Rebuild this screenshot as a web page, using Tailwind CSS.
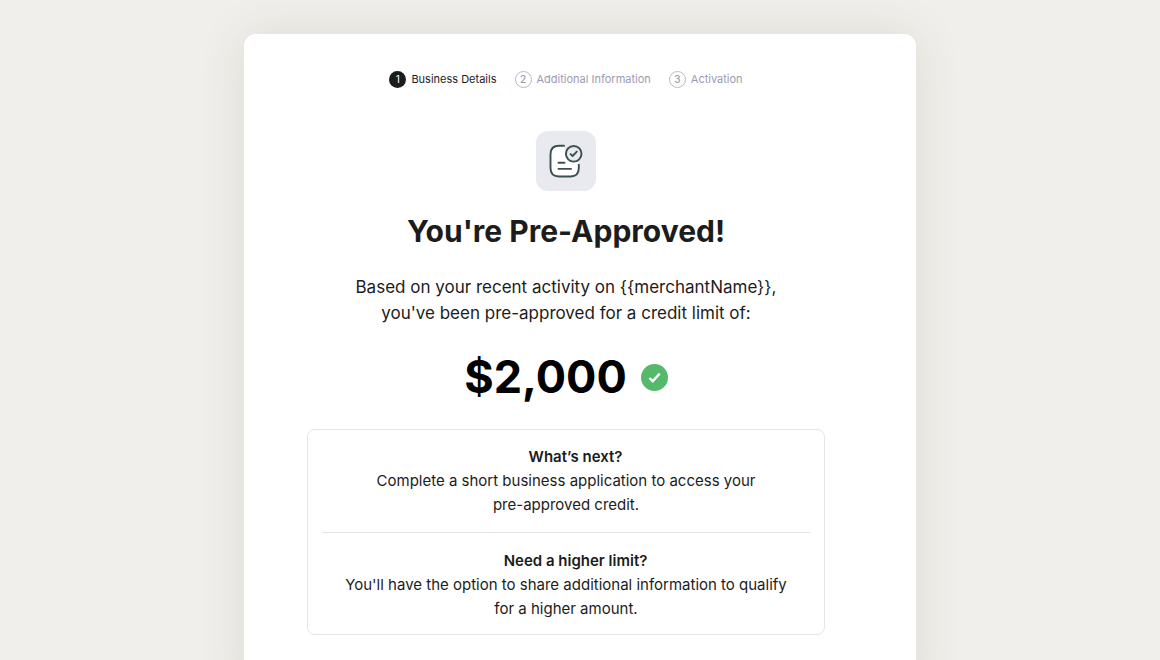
<!DOCTYPE html>
<html lang="en">
<head>
  <meta charset="UTF-8" />
  <meta name="viewport" content="width=device-width, initial-scale=1.0" />
  <title>You're Pre-Approved!</title>
  <script src="https://cdn.jsdelivr.net/npm/@tailwindcss/browser@4"></script>
</head>
<body class="flex min-h-screen bg-[#f0efeb] px-4 pt-[34px] font-['Inter',sans-serif] text-[#1c1c1c]">
  <main class="mx-auto flex w-full max-w-[672px] flex-col items-center rounded-t-xl bg-white pt-9 pr-[91px] pb-16 pl-[63px] text-center shadow-[0_0_48px_rgba(60,60,50,0.11)]">
    <!-- Steps -->
    <ol class="flex items-center gap-[18px] text-[11px] leading-[18px] whitespace-nowrap">
      <li class="flex items-center gap-[5px]" aria-current="step">
        <span class="flex size-[17px] items-center justify-center rounded-full bg-[#1c1c1c] text-[10px] text-white">1</span>
        Business Details
      </li>
      <li class="flex items-center gap-[5px] text-[#9b9bb0]">
        <span class="flex size-[17px] items-center justify-center rounded-full border border-[#b9b9cc] text-[10px] font-medium">2</span>
        Additional Information
      </li>
      <li class="flex items-center gap-[5px] text-[#9b9bb0]">
        <span class="flex size-[17px] items-center justify-center rounded-full border border-[#b9b9cc] text-[10px] font-medium">3</span>
        Activation
      </li>
    </ol>

    <div class="mt-[43px] flex size-[60px] items-center justify-center rounded-xl bg-[#e9eaf0]">
      <svg class="size-10" viewBox="0 0 40 40" fill="none" stroke="#3a5150" stroke-width="1.9" stroke-linecap="round" stroke-linejoin="round" aria-hidden="true">
        <path fill="#fff" stroke="none" d="M18 4.800h-5Q4.500 4.800 4.500 13v14.500q0 8 8 8h12.500q8 0 8-8V21l-8-1-6-6z" />
        <path d="M18 4.800h-5Q4.500 4.800 4.500 13.300v13.700q0 8.500 8.500 8.500h11.500q8.300 0 8.300-8.500v-3.300" />
        <path d="M12.500 21.800h6M12.500 27.900h12.500" />
        <circle cx="27.700" cy="12.800" r="7.800" fill="#e9eaf0" />
        <path d="m24.600 13.100 2 1.900 4.200-4.400" />
      </svg>
    </div>

    <h1 class="mt-5 text-[30px] leading-10 font-bold">You're Pre-Approved!</h1>
    <p class="mt-[23px] text-[17px] leading-[26px]">
      Based on your recent activity on {{merchantName}},<br />
      you've been pre-approved for a credit limit of:
    </p>

    <div class="mt-[23px] flex items-center gap-[14px]">
      <strong class="text-[45px] leading-14 font-bold text-black">$2,000</strong>
      <svg class="size-[27px]" viewBox="0 0 27 27" fill="none" aria-hidden="true">
        <circle cx="13.500" cy="13.500" r="13.500" fill="#54b96a" />
        <path d="m8.500 14 3.200 3.200 7-7.600" stroke="#fff" stroke-width="2.400" />
      </svg>
    </div>

    <!-- Info box -->
    <div class="mt-6 w-full rounded-lg border border-[#e6e6ea] px-[14px] text-[15px] leading-6">
      <section class="border-b border-[#e3e3ea] py-[15px]">
        <h2 class="pl-[19px] font-semibold">What’s next?</h2>
        <p>Complete a short business application to access your<br />pre-approved credit.</p>
      </section>
      <section class="pt-4 pb-[13px]">
        <h2 class="pl-[19px] font-semibold">Need a higher limit?</h2>
        <p>You'll have the option to share additional information to qualify<br />for a higher amount.</p>
      </section>
    </div>
  </main>
</body>
</html>
